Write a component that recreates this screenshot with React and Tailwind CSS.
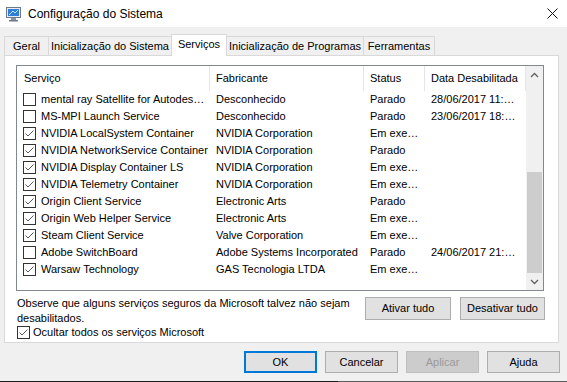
import React from 'react';

const services = [
  ['mental ray Satellite for Autodes…', 'Desconhecido', 'Parado', '28/06/2017 11:…', false],
  ['MS-MPI Launch Service', 'Desconhecido', 'Parado', '23/06/2017 18:…', false],
  ['NVIDIA LocalSystem Container', 'NVIDIA Corporation', 'Em exe…', '', true],
  ['NVIDIA NetworkService Container', 'NVIDIA Corporation', 'Parado', '', true],
  ['NVIDIA Display Container LS', 'NVIDIA Corporation', 'Em exe…', '', true],
  ['NVIDIA Telemetry Container', 'NVIDIA Corporation', 'Em exe…', '', true],
  ['Origin Client Service', 'Electronic Arts', 'Parado', '', true],
  ['Origin Web Helper Service', 'Electronic Arts', 'Em exe…', '', true],
  ['Steam Client Service', 'Valve Corporation', 'Em exe…', '', true],
  ['Adobe SwitchBoard', 'Adobe Systems Incorporated', 'Parado', '24/06/2017 21:…', false],
  ['Warsaw Technology', 'GAS Tecnologia LTDA', 'Em exe…', '', true],
];

const CheckBox = ({ checked }) => (
  <span className="w-[13px] h-[13px] border border-[#333333] bg-white flex items-center justify-center shrink-0">
    {checked && (
      <svg width="11" height="11" viewBox="0 0 11 11">
        <path d="M1.5 5.5 L4 8 L9.5 2.5" fill="none" stroke="#5a5a5a" strokeWidth="1" />
      </svg>
    )}
  </span>
);

const Arrow = ({ up }) => (
  <svg width="9" height="6" viewBox="0 0 9 6">
    <path d={up ? 'M1 5 L4.5 1.5 L8 5' : 'M1 1 L4.5 4.5 L8 1'} fill="none" stroke="#606060" strokeWidth="1.3" />
  </svg>
);

const Tab = ({ label, w, active }) =>
  active ? (
    <div className={`${w} h-[22px] -mb-px -ml-px relative z-10 bg-white border border-b-0 border-[#d9d9d9] flex items-center justify-center pb-[3px]`}>
      {label}
    </div>
  ) : (
    <div className={`${w} h-[19px] -ml-px first:ml-0 bg-[#f0f0f0] border border-b-0 border-[#d9d9d9] flex items-center justify-center`}>
      {label}
    </div>
  );

const App = () => {
  return (
    <div className="w-[567px] h-[382px] bg-[#f0f0f0] flex flex-col overflow-hidden text-[11px] text-black font-['Liberation_Sans',Arial,sans-serif]">
      {/* Title bar */}
      <div className="h-[27px] bg-white flex items-center pl-[6px] pr-[9px] shrink-0">
        <svg width="16" height="16" viewBox="0 0 16 16">
          <rect x="0.5" y="1.5" width="14" height="10" fill="#e8ecf2" stroke="#6d7a8c" />
          <rect x="2" y="3" width="11" height="7" fill="#2f7fd6" />
          <path d="M3 9 L7 5 L9 7 L12 4" fill="none" stroke="#bfe3ff" strokeWidth="1" />
          <rect x="5" y="12" width="5" height="2" fill="#8a94a3" />
          <rect x="3" y="14" width="9" height="1.5" fill="#6d7a8c" />
        </svg>
        <span className="ml-[6px] text-[12px]">Configuração do Sistema</span>
        <div className="flex-1" />
        <svg width="11" height="11" viewBox="0 0 11 11">
          <path d="M0.5 0.5 L10.5 10.5 M10.5 0.5 L0.5 10.5" stroke="#111" strokeWidth="1" />
        </svg>
      </div>

      {/* Tabs */}
      <div className="flex items-end pl-[4px] mt-[7px] h-[21px] shrink-0">
        <Tab label="Geral" w="w-[45px]" />
        <Tab label="Inicialização do Sistema" w="w-[124px]" />
        <Tab label="Serviços" w="w-[56px]" active />
        <Tab label="Inicialização de Programas" w="w-[138px]" />
        <Tab label="Ferramentas" w="w-[72px]" />
      </div>

      {/* Panel */}
      <div className="ml-[4px] w-[555px] h-[288px] bg-white border border-[#d9d9d9] pl-[11px] pr-[13px] pt-[9px] flex flex-col shrink-0">
        <div className="w-[528px] h-[226px] border border-[#828790] flex">
          <div className="flex-1 flex flex-col">
            <div className="h-[25px] flex items-center">
              <div className="w-[193px] h-full pl-[7px] flex items-center border-r border-[#e5e5e5]">Serviço</div>
              <div className="w-[154px] h-full pl-[6px] flex items-center border-r border-[#e5e5e5]">Fabricante</div>
              <div className="w-[61px] h-full pl-[6px] flex items-center border-r border-[#e5e5e5]">Status</div>
              <div className="w-[101px] h-full pl-[6px] flex items-center border-r border-[#e5e5e5]">Data Desabilitada</div>
            </div>
            {services.map(([name, maker, status, date, checked]) => (
              <div key={name} className="h-[17px] flex items-center whitespace-nowrap">
                <div className="w-[193px] pl-[6px] flex items-center gap-[5px] overflow-hidden">
                  <CheckBox checked={checked} />
                  <span>{name}</span>
                </div>
                <div className="w-[154px] pl-[6px] overflow-hidden">{maker}</div>
                <div className="w-[61px] pl-[6px] overflow-hidden">{status}</div>
                <div className="w-[101px] pl-[6px] overflow-hidden">{date}</div>
              </div>
            ))}
          </div>
          {/* Scrollbar */}
          <div className="w-[17px] bg-[#f0f0f0] flex flex-col">
            <div className="h-[17px] flex items-center justify-center">
              <Arrow up />
            </div>
            <div className="h-[89px]" />
            <div className="flex-1 mx-px bg-[#cdcdcd]" />
            <div className="h-[17px] flex items-center justify-center">
              <Arrow />
            </div>
          </div>
        </div>

        <div className="flex mt-[5px]">
          <div className="flex-1 pl-px">
            <p className="leading-[15px]">
              Observe que alguns serviços seguros da Microsoft talvez não sejam
              <br />
              desabilitados.
            </p>
            <label className="flex items-center gap-[3px] h-[13px]">
              <CheckBox checked />
              <span>Ocultar todos os serviços Microsoft</span>
            </label>
          </div>
          <div className="flex gap-[9px] pt-px">
            <button className="w-[86px] h-[23px] bg-[#e1e1e1] border border-[#adadad]">Ativar tudo</button>
            <button className="w-[85px] h-[23px] bg-[#e1e1e1] border border-[#adadad]">Desativar tudo</button>
          </div>
        </div>
      </div>

      {/* Dialog buttons */}
      <div className="flex justify-end gap-[8px] pr-[7px] mt-[8px] shrink-0">
        <button className="w-[73px] h-[22px] bg-[#e1e1e1] border-2 border-[#0078d7]">OK</button>
        <button className="w-[73px] h-[22px] bg-[#e1e1e1] border border-[#adadad]">Cancelar</button>
        <button className="w-[73px] h-[22px] bg-[#cccccc] border border-[#bfbfbf] text-[#9a9a9a]">Aplicar</button>
        <button className="w-[73px] h-[22px] bg-[#e1e1e1] border border-[#adadad]">Ajuda</button>
      </div>

      <div className="flex-1" />
      <div className="h-px flex shrink-0">
        <div className="w-[338px] bg-[#1a1a1a]" />
        <div className="flex-1 bg-[#5a5a5a]" />
      </div>
    </div>
  );
};

export default App;
